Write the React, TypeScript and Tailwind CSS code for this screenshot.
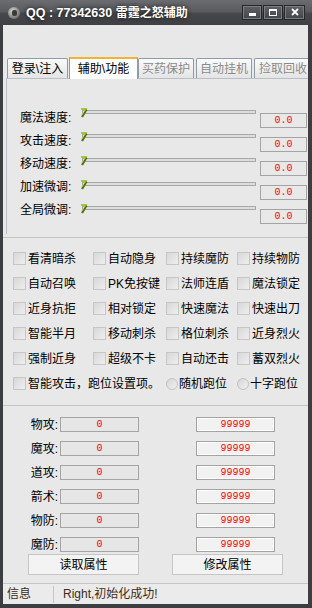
import React from "react";

const sliders = ["魔法速度:", "攻击速度:", "移动速度:", "加速微调:", "全局微调:"];
const checks = [
  ["看清暗杀", "自动隐身", "持续魔防", "持续物防"],
  ["自动召唤", "PK免按键", "法师连盾", "魔法锁定"],
  ["近身抗拒", "相对锁定", "快速魔法", "快速出刀"],
  ["智能半月", "移动刺杀", "格位刺杀", "近身烈火"],
  ["强制近身", "超级不卡", "自动还击", "蓄双烈火"],
];
const stats = ["物攻", "魔攻", "道攻", "箭术", "物防", "魔防"];

function Box() {
  return (
    <span className="w-[13px] h-[13px] shrink-0 border border-[#c6c6c6] bg-[linear-gradient(135deg,#d8d8d8,#eeeeee)]" />
  );
}

function Check({ label }: { label: string }) {
  return (
    <div className="flex items-center gap-[2px] h-[25px] text-[12px] leading-[14px] text-black whitespace-nowrap">
      <Box />
      <span>{label}</span>
    </div>
  );
}

function Radio({ label }: { label: string }) {
  return (
    <div className="flex items-center gap-[1px] h-[25px] text-[12px] leading-[14px] text-black whitespace-nowrap">
      <span className="w-[12px] h-[12px] shrink-0 rounded-full border border-[#c2c2c2] bg-[linear-gradient(135deg,#d6d6d6,#f0f0f0)]" />
      <span>{label}</span>
    </div>
  );
}

function Thumb() {
  return (
    <svg width="7" height="10" viewBox="0 0 7 10" className="absolute left-[1px] top-[1px]">
      <rect x="0" y="0" width="6" height="2" fill="#a6c83c" />
      <path d="M5.5 1.5 L1 9" stroke="#4f6e0c" strokeWidth="2.2" fill="none" />
      <path d="M4.5 1.5 L0.5 7.5" stroke="#c8e070" strokeWidth="0.8" fill="none" />
    </svg>
  );
}

export default function App() {
  return (
    <div className="w-[312px] h-[608px] flex flex-col bg-[#3c3e42] overflow-hidden font-[family-name:Liberation_Sans,Noto_Sans_CJK_SC,sans-serif]">
      {/* Title bar */}
      <div className="h-[25px] shrink-0 flex items-center bg-[linear-gradient(#6a6c70,#5a5c60_45%,#45474b_55%,#3e4044)]">
        <span className="ml-[8px] w-[12px] h-[12px] rounded-full bg-[radial-gradient(circle_at_40%_35%,#d8d8d8,#8a8a8a_55%,#4a4a4a)] flex items-center justify-center">
          <span className="w-[5px] h-[6px] rounded-[2px] bg-[#3a3a3a]" />
        </span>
        <span className="ml-[6px] text-white font-bold text-[12.5px] leading-[16px] [text-shadow:0_0_4px_rgba(0,0,0,0.9)] whitespace-nowrap">
          QQ : 77342630 <span className="text-[12px]">雷霆之怒辅助</span>
        </span>
        <div className="ml-auto mr-[7px] flex gap-[1px] mb-[1px]">
          <div className="w-[20px] h-[15px] border border-[#25272a] bg-[linear-gradient(#5e6064,#44464a)] shadow-[inset_0_0_0_1px_#7a7c80] flex items-end justify-center pb-[3px]">
            <span className="w-[7px] h-[3px] bg-white" />
          </div>
          <div className="w-[20px] h-[15px] border border-[#25272a] bg-[linear-gradient(#5e6064,#44464a)] shadow-[inset_0_0_0_1px_#7a7c80] flex items-center justify-center">
            <span className="w-[8px] h-[7px] border border-white border-t-2" />
          </div>
          <div className="w-[21px] h-[15px] border border-[#25272a] bg-[linear-gradient(#5e6064,#44464a)] shadow-[inset_0_0_0_1px_#7a7c80] flex items-center justify-center">
            <svg width="8" height="8" viewBox="0 0 8 8">
              <path d="M1 1 L7 7 M7 1 L1 7" stroke="white" strokeWidth="1.8" />
            </svg>
          </div>
        </div>
      </div>

      {/* Client */}
      <div className="flex-1 ml-[3px] mr-[4px] mb-[4px] bg-[#e8e8e8] flex flex-col">
        <div className="h-[32px] shrink-0" />
        {/* Tabs */}
        <div className="h-[21px] shrink-0 flex items-end pl-[4px] text-[12px] leading-[14px] whitespace-nowrap">
          <div className="w-[61px] h-[20px] border border-b-0 border-[#8e9ca8] rounded-t-[2px] bg-[linear-gradient(#fbfbfb,#e4e4e4)] flex items-center justify-center text-black">
            登录\注入
          </div>
          <div className="ml-[1px] w-[69px] h-[22px] -mb-[1px] relative z-10 border border-b-0 border-[#8e9ca8] border-t-2 border-t-[#f2b232] bg-white flex items-center justify-center text-black">
            辅助\功能
          </div>
          <div className="w-[56px] h-[20px] border border-b-0 border-[#8e9ca8] rounded-t-[2px] bg-[linear-gradient(#fbfbfb,#e4e4e4)] flex items-center justify-center text-[#8a8a8a]">
            买药保护
          </div>
          <div className="ml-[2px] w-[56px] h-[20px] border border-b-0 border-[#8e9ca8] rounded-t-[2px] bg-[linear-gradient(#fbfbfb,#e4e4e4)] flex items-center justify-center text-[#8a8a8a]">
            自动挂机
          </div>
          <div className="ml-[2px] flex-1 h-[20px] border border-b-0 border-r-0 border-[#8e9ca8] rounded-tl-[2px] bg-[linear-gradient(#fbfbfb,#e4e4e4)] flex items-center pl-[4px] overflow-hidden text-[#8a8a8a]">
            捡取回收
          </div>
        </div>

        {/* Tab panel */}
        <div className="h-[156px] shrink-0 ml-[3px] border-l border-t border-[#b8bfc6] pt-[28px] flex">
          <div className="w-[73px] pl-[13px] pt-[4px] flex flex-col text-[12px] leading-[14px] text-black whitespace-nowrap">
            {sliders.map((s) => (
              <div key={s} className="h-[23px]">{s}</div>
            ))}
          </div>
          <div className="w-[176px] flex flex-col">
            {sliders.map((s) => (
              <div key={s} className="h-[24px] relative">
                <div className="mt-[3px] ml-[2px] h-[4px] border border-[#a8a8a8] bg-[#dcdcdc]" />
                <Thumb />
              </div>
            ))}
          </div>
          <div className="ml-[4px] w-[47px] flex flex-col gap-[9px] pt-[6px]">
            {sliders.map((s) => (
              <div key={s} className="h-[15px] border border-[#a4a4a4] bg-[#e8e8e8] flex items-center justify-center font-[family-name:Liberation_Mono,monospace] text-[10px] leading-[12px] text-[#ff0000]">
                0.0
              </div>
            ))}
          </div>
        </div>

        <div className="h-[3px] shrink-0" />
        <div className="h-px shrink-0 bg-[#c4c4c4]" />

        {/* Checkbox group */}
        <div className="h-[167px] shrink-0 pt-[8px] pl-[10px] grid grid-cols-[80px_73px_71px_1fr] auto-rows-[25px] content-start">
          {checks.flat().map((c) => (
            <Check key={c} label={c} />
          ))}
          <div className="col-span-2">
            <Check label="智能攻击，跑位设置项。" />
          </div>
          <Radio label="随机跑位" />
          <Radio label="十字跑位" />
        </div>

        <div className="h-px shrink-0 bg-[#c4c4c4]" />

        {/* Stats */}
        <div className="pt-[11px] flex flex-col gap-[9px]">
          {stats.map((s) => (
            <div key={s} className="h-[15px] flex items-center">
              <span className="w-[55px] text-right text-[12px] leading-[14px] text-black">{s}:</span>
              <span className="ml-[2px] w-[79px] h-[15px] border border-[#a4a4a4] bg-[#e6e6e6] flex items-center justify-center font-[family-name:Liberation_Mono,monospace] text-[10px] leading-[12px] text-[#ff0000]">
                0
              </span>
              <span className="ml-[57px] w-[79px] h-[15px] border border-[#a4a4a4] bg-[#f2f2f2] shadow-[inset_0_0_0_1px_#ffffff] flex items-center justify-center font-[family-name:Liberation_Mono,monospace] text-[10px] leading-[12px] text-[#ff0000]">
                99999
              </span>
            </div>
          ))}
        </div>
        <div className="mt-[2px] flex">
          <button className="ml-[25px] w-[111px] h-[21px] border border-[#c6c6c6] bg-[#f3f3f3] text-[12px] leading-[14px] text-black">
            读取属性
          </button>
          <button className="ml-[33px] w-[111px] h-[21px] border border-[#c6c6c6] bg-[#f3f3f3] text-[12px] leading-[14px] text-black">
            修改属性
          </button>
        </div>

        {/* Status bar */}
        <div className="mt-auto h-[21px] shrink-0 border-t border-[#c6c6c6] bg-[#ebebeb] flex items-center text-[12px] leading-[14px] text-[#3e2c16]">
          <span className="w-[50px] pl-[4px]">信息</span>
          <span className="w-px h-[17px] bg-[#c6c6c6]" />
          <span className="ml-[9px]">Right,初始化成功!</span>
        </div>
      </div>
    </div>
  );
}
